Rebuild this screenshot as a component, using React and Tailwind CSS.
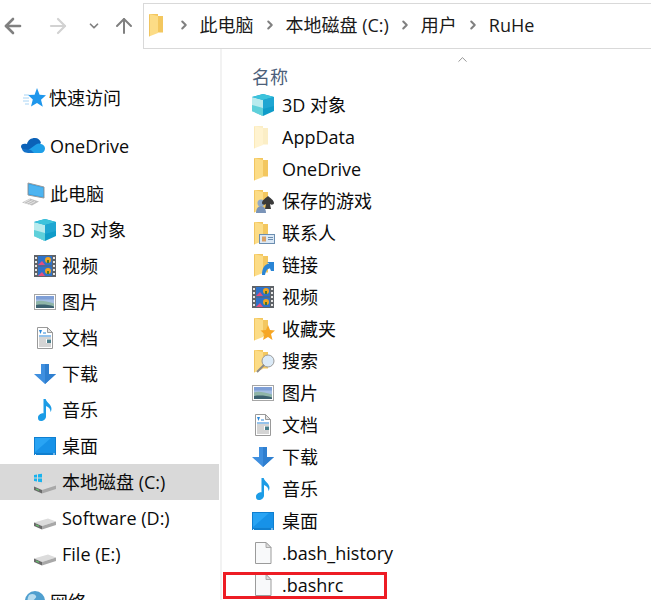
import { ArrowLeft, ArrowRight, ArrowUp, ChevronDown, ChevronRight, ChevronUp } from 'lucide-react'

function Folder({ light = false, children }) {
  return (
    <svg width="24" height="24" viewBox="0 0 24 24" className="shrink-0">
      <path d="M3 1h9v2h5v16.500H12z" fill={light ? '#fbeec6' : '#f3c75f'} />
      <path d="M3 1l9 2v17l-9 3.500z" fill={light ? '#fff3d0' : '#fcdc86'} />
      <path d="M3 1.500v22l1-.4V1.700z" fill={light ? '#fbe9b8' : '#f1c560'} />
      {children}
    </svg>
  )
}

function Cube() {
  return (
    <svg width="24" height="24" viewBox="0 0 24 24" className="shrink-0">
      <path d="M12 1l11 3v14l-11 5L1 18V4z" fill="#0f9cc9" />
      <path d="M1 4l11 3v16L1 18z" fill="#b8ebee" />
      <path d="M1 12l11 3v8L1 18z" fill="#5ed0da" />
      <path d="M12 1l11 3-11 3L1 4z" fill="#3cc3dc" />
      <path d="M12 7l11-3v9l-11 3z" fill="#1fa6d2" />
    </svg>
  )
}

function Film() {
  return (
    <svg width="24" height="24" viewBox="0 0 24 24" className="shrink-0">
      <rect x="1" y="1" width="22" height="22" fill="#5f6368" />
      <rect x="5" y="2" width="14" height="9.500" fill="#2f72c8" />
      <rect x="5" y="12.500" width="14" height="9.500" fill="#2f72c8" />
      <path d="M5 11l4-4 3 4zM5 22l4-4 3 4z" fill="#e64f7d" />
      <circle cx="15" cy="6" r="3" fill="#f3a41f" />
      <circle cx="15" cy="17" r="3" fill="#f3a41f" />
      <path d="M14 6h2v3h-2zM14 17h2v3h-2z" fill="#4d7a22" />
      <path
        d="M2 3h2v2H2zM2 7h2v2H2zM2 11h2v2H2zM2 15h2v2H2zM2 19h2v2H2zM20 3h2v2h-2zM20 7h2v2h-2zM20 11h2v2h-2zM20 15h2v2h-2zM20 19h2v2h-2z"
        fill="#e7e7e7"
      />
    </svg>
  )
}

function Picture() {
  return (
    <svg width="24" height="24" viewBox="0 0 24 24" className="shrink-0">
      <rect x="1.500" y="4.500" width="21" height="15" fill="#fff" stroke="#a6a6a6" />
      <rect x="3" y="6" width="18" height="12" fill="#a4bde2" />
      <path d="M3 6h18v3.500H3z" fill="#7f9fd6" />
      <path d="M3 11.500c5-1.500 9-.5 18 2V18H3z" fill="#8fb5a8" />
      <path d="M3 15c6-1 12-.5 18 1.500V18H3z" fill="#3c6170" />
    </svg>
  )
}

function Doc() {
  return (
    <svg width="24" height="24" viewBox="0 0 24 24" className="shrink-0">
      <path d="M4.500 1.500h10l5 5v16h-15z" fill="#fff" stroke="#9a9a9a" />
      <path d="M14.500 1.500v5h5z" fill="#e2e2e2" stroke="#9a9a9a" />
      <path d="M6 4h3l-1.500 4z" fill="#2a86d8" />
      <path d="M10 7h3M6 10h12" stroke="#2a86d8" strokeWidth="1" />
      <path d="M6 12h12M6 14h7M6 16h7M6 18h12M6 20h12" stroke="#a9a9a9" strokeWidth="1" />
      <rect x="14" y="13.500" width="4" height="3.500" fill="#4a7f8c" />
    </svg>
  )
}

function Download() {
  return (
    <svg width="24" height="24" viewBox="0 0 24 24" className="shrink-0">
      <path d="M8 2h8v10h7L12 22 1 12h7z" fill="#3f8fdf" />
      <path d="M12 2h4v10h7L12 22z" fill="#2f7fd0" />
    </svg>
  )
}

function Music() {
  return (
    <svg width="24" height="24" viewBox="0 0 24 24" className="shrink-0">
      <path
        d="M10.500 1h2.200c.4 3 4.800 5 5.600 8.500.4 1.800 0 3.500-.8 4.500.2-3-1.800-5-4.500-6v10.500c0 2.500-2.500 4.500-5 4.500S5 21.500 5 19.500 7.500 15 10.500 15.300z"
        fill="#1c9ce6"
      />
    </svg>
  )
}

function Desktop() {
  return (
    <svg width="24" height="24" viewBox="0 0 24 24" className="shrink-0">
      <rect x="1" y="3" width="22" height="18" fill="#0f7fd0" />
      <path d="M2 4h20v14.500H2z" fill="#29a4f4" />
      <path d="M2 18L18 4h4v14.500z" fill="#1792e8" />
      <path d="M2 20h1v1H2zM20 19.500h2v1h-2z" fill="#dff2ff" />
    </svg>
  )
}

function Disk({ windows = false }) {
  return (
    <svg width="24" height="24" viewBox="0 0 24 24" className="shrink-0">
      <path d="M1 16.500l14-4 8 3-14 4.500z" fill="#dcdcdc" />
      <path d="M1 16.500L9 20v3.500l-8-3.500z" fill="#6a6a6a" />
      <path d="M9 20l14-4.500V19L9 23.500z" fill="#a8a8a8" />
      <path d="M3 19l3 1.300" stroke="#62d26a" strokeWidth="1" />
      {windows && <path d="M1 5l3-.5v3H1zM5 4.300l4-.6v3.800H5zM1 8.500h3v3l-3-.5zM5 8.500h4v3.800l-4-.6z" fill="#19b3ee" />}
    </svg>
  )
}

function QuickStar() {
  return (
    <svg width="24" height="24" viewBox="0 0 24 24" className="shrink-0">
      <path d="M15 2l2.600 6.800 6.400.4-5 4.600 1.800 7L15 17l-6 3.500 1.800-7-4.800-4.400 6.600-.3z" fill="#1f97ec" />
      <path d="M2 9h5M1 12h6M1 15h6M3 18h4" stroke="#a7d4f5" strokeWidth="1" />
    </svg>
  )
}

function Cloud() {
  return (
    <svg width="24" height="24" viewBox="0 0 24 24" className="shrink-0">
      <path d="M6 10c1-4 4-6 8-6 3 0 5.500 2 6 5l-8 7H4c-2 0-4-1.500-4-3.500S2 9 6 10z" fill="#0b62b8" />
      <path d="M9 19c-2 0-3-1-3-2l9-6.500c2-1.500 4-1 5-.5 2 .2 4 2 4 4.500S22 19 20 19z" fill="#1e9fe8" />
      <path d="M1 15c1 3 3 4 8 4 2 0 3 0 4 0l-3-3-8-1z" fill="#1472c8" />
    </svg>
  )
}

function Computer() {
  return (
    <svg width="24" height="24" viewBox="0 0 24 24" className="shrink-0">
      <path d="M6 1l16 4v11L6 13z" fill="#2d9fe8" stroke="#9a9a9a" />
      <path d="M7 2.500l14 3.300v9L7 12z" fill="#4db4f0" />
      <path d="M0 20.500l8-4 9 3-7 4z" fill="#bfbfbf" />
      <path d="M2 20.500l6-3M4.500 21.500l6-3M7 22.500l6-3" stroke="#eeeeee" strokeWidth="0.800" />
    </svg>
  )
}

function Globe() {
  return (
    <svg width="24" height="24" viewBox="0 0 24 24" className="shrink-0">
      <circle cx="13" cy="11" r="10" fill="#4f9fcf" />
      <path d="M7 5c3-2 6-1 7 1s-2 3-3 5-4 1-5 0 0-4 1-6zM16 11c2-1 4 0 4 2s-2 4-3 4-2-4-1-6z" fill="#b7dcef" />
      <path d="M0 22h14v2H0z" fill="#8f8f8f" />
    </svg>
  )
}

function BlankFile() {
  return (
    <svg width="24" height="24" viewBox="0 0 24 24" className="shrink-0">
      <path d="M4.500 1.500h10.500l5 5v16H4.500z" fill="#f8f9fa" stroke="#9b9b9b" />
      <path d="M15 1.500v5h5z" fill="#dcdcdc" stroke="#9b9b9b" strokeWidth="0.800" />
    </svg>
  )
}

const games = (
  <>
    <circle cx="10" cy="14" r="3.500" fill="#8fa9c9" />
    <path d="M5 24c0-4 2-7 5-7s5 3 5 7z" fill="#7a94b8" />
    <path d="M17 7c2 2 6 4 6 7 0 2-3 2-4 1l1 5h-6l1-5c-1 1-4 1-4-1 0-3 4-5 6-7z" fill="#3a3a3a" />
  </>
)
const contacts = (
  <>
    <rect x="8.500" y="13.500" width="15" height="9" fill="#dbe8f5" stroke="#6c8eb0" />
    <rect x="11" y="15.500" width="4" height="5" fill="#d9a066" />
    <path d="M17 16.500h5M17 18.500h5" stroke="#6c8eb0" />
  </>
)
const link = (
  <>
    <path d="M23 9v9h-3l-1-2.500c-2.500 0-4 2-5 6.500h-3c0-7 2.500-10.500 7-11.500l-2-1.500z" fill="#2a85d5" />
  </>
)
const fav = (
  <>
    <path d="M17 8l2 5 5 .5-4 3.500 1.500 6-4.500-3-5 3 1.500-6-4-3.500 5.500-.5z" fill="#f6a623" />
  </>
)
const search = (
  <>
    <circle cx="17" cy="12" r="6" fill="#dbeaf7" stroke="#9a9a9a" />
    <path d="M13 16l-7 7" stroke="#8a8a8a" strokeWidth="2" />
  </>
)

const sideLibs = [
  [<Cube />, '3D 对象'],
  [<Film />, '视频'],
  [<Picture />, '图片'],
  [<Doc />, '文档'],
  [<Download />, '下载'],
  [<Music />, '音乐'],
  [<Desktop />, '桌面'],
  [<Disk windows />, '本地磁盘 (C:)', true],
  [<Disk />, 'Software (D:)'],
  [<Disk />, 'File (E:)'],
]

const files = [
  [<Cube />, '3D 对象'],
  [<Folder light />, 'AppData'],
  [<Folder />, 'OneDrive'],
  [<Folder>{games}</Folder>, '保存的游戏'],
  [<Folder>{contacts}</Folder>, '联系人'],
  [<Folder>{link}</Folder>, '链接'],
  [<Film />, '视频'],
  [<Folder>{fav}</Folder>, '收藏夹'],
  [<Folder>{search}</Folder>, '搜索'],
  [<Picture />, '图片'],
  [<Doc />, '文档'],
  [<Download />, '下载'],
  [<Music />, '音乐'],
  [<Desktop />, '桌面'],
  [<BlankFile />, '.bash_history'],
]

function SideRow({ icon, label, indent = 'pl-[33px]', gap = 'gap-[5px]', active, className = '' }) {
  return (
    <div className={`flex h-9 items-center ${gap} ${indent} ${active ? 'bg-[#d9d9d9]' : ''} ${className}`}>
      {icon}
      <span className="whitespace-nowrap">{label}</span>
    </div>
  )
}

function Crumb({ children }) {
  return (
    <>
      <ChevronRight size={14} strokeWidth={3.5} className="mx-[6.500px] text-[#808080]" />
      <span className="mx-[2.500px] whitespace-nowrap">{children}</span>
    </>
  )
}

export default function App() {
  return (
    <div
      className="h-[600px] w-[651px] overflow-hidden bg-white text-[18px] text-[#0b0b0b]"
      style={{ fontFamily: '"Open Sans", "Noto Sans CJK SC", sans-serif' }}
    >
      {/* toolbar and address bar */}
      <div className="flex h-[49px] items-start pt-[3px]">
        <div className="flex h-[46px] w-[143px] items-center pl-[1px] text-[#808080]">
          <ArrowLeft size={24} strokeWidth={2.600} />
          <ArrowRight size={24} strokeWidth={2.200} className="ml-[21px] text-[#d2d2d2]" />
          <ChevronDown size={14} strokeWidth={3} className="ml-[17px]" />
          <ArrowUp size={24} strokeWidth={2} className="ml-[11px]" />
        </div>
        <div className="flex h-[46px] flex-1 items-center border border-r-0 border-[#d9d9d9] pb-[2px] pl-[2px] text-[#1a1a1a]">
          <Folder />
          <Crumb>此电脑</Crumb>
          <Crumb>本地磁盘 (C:)</Crumb>
          <Crumb>用户</Crumb>
          <Crumb>RuHe</Crumb>
        </div>
      </div>

      <div className="flex">
        {/* nav pane */}
        <div className="h-[551px] w-[222px] shrink-0 border-r-2 border-[#f2f2f2] pr-[1px] pt-[31px]">
          <SideRow icon={<QuickStar />} label="快速访问" indent="pl-[22px]" gap="gap-[3px]" />
          <SideRow icon={<Cloud />} label="OneDrive" indent="pl-[21px]" className="mt-3" />
          <SideRow icon={<Computer />} label="此电脑" indent="pl-[22px]" gap="gap-[4px]" className="mt-3" />
          {sideLibs.map(([icon, label, active]) => (
            <SideRow key={label} icon={icon} label={label} active={active} />
          ))}
          <SideRow icon={<Globe />} label="网络" indent="pl-[22px]" gap="gap-[4px]" className="mt-3" />
        </div>

        {/* file list */}
        <div className="relative flex-1 pl-[29px]">
          <ChevronUp size={15} strokeWidth={1} className="absolute left-[233px] top-[3px] text-[#555555]" />
          <div className="mt-[14px] flex h-[24px] items-center pl-[1px] pt-[4px] text-[#4c607a]">名称</div>
          <div className="mt-[2px]">
            {files.map(([icon, label]) => (
              <div key={label} className="flex h-8 items-center gap-[7px] whitespace-nowrap">
                {icon}
                <span>{label}</span>
              </div>
            ))}
            <div className="relative flex h-8 items-center gap-[7px]">
              <BlankFile />
              <span>.bashrc</span>
              <div className="absolute left-[-28px] top-[3px] h-[27px] w-[164px] border-[3px] border-[#ed1c24]" />
            </div>
          </div>
        </div>
      </div>
    </div>
  )
}
